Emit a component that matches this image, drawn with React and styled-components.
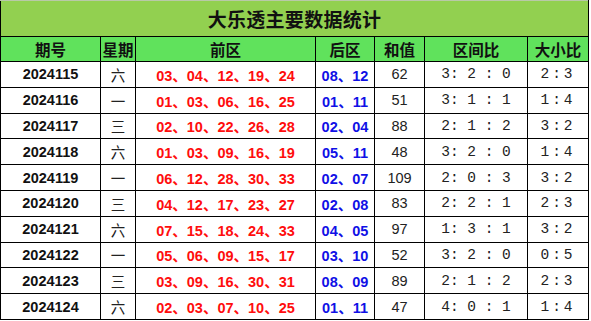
import React from "react";
import styled, { createGlobalStyle } from "styled-components";

const Global = createGlobalStyle`
  body {
    margin: 0;
    background: #fff;
    font-family: "Liberation Sans", "Noto Sans CJK SC", sans-serif;
  }
`;

const Table = styled.table`
  border-collapse: collapse;
  table-layout: fixed;
  width: 589px;
  border: 1px solid #000;
  td,
  th {
    border: 1px solid #000;
    text-align: center;
    padding: 0;
    white-space: nowrap;
    overflow: hidden;
  }
`;

const TitleCell = styled.th`
  height: 35px;
  background: #92d050;
  color: #111;
  font-family: "Noto Sans CJK SC", sans-serif;
  font-weight: 700;
  font-size: 19px;
  letter-spacing: 0.3px;
  border-top-color: #b9c9a8 !important;
`;

const HeadCell = styled.th`
  height: 24px;
  background: #60e25c;
  color: #111;
  font-family: "Noto Sans CJK SC", sans-serif;
  font-weight: 700;
  font-size: 15.5px;
`;

const Row = styled.tr`
  height: 25.8px;
`;

const Cell = styled.td`
  color: ${(p) => p.$color || "#222"};
  font-weight: ${(p) => (p.$bold ? 700 : 400)};
  font-size: 14.5px;
  font-family: ${(p) =>
    p.$mono
      ? '"Liberation Mono", "Noto Sans CJK SC", monospace'
      : p.$cjk
      ? '"Noto Sans CJK SC", sans-serif'
      : '"Liberation Sans", "Noto Sans CJK SC", sans-serif'};
  letter-spacing: ${(p) => p.$spacing || "0"};
  white-space: pre !important;
`;

const cols = [100, 35, 180, 59, 50, 103, 61];
const heads = ["期号", "星期", "前区", "后区", "和值", "区间比", "大小比"];

const rows = [
  ["2024115", "六", "03、04、12、19、24", "08、12", "62", "3: 2 : 0", "2:3"],
  ["2024116", "一", "01、03、06、16、25", "01、11", "51", "3: 1 : 1", "1:4"],
  ["2024117", "三", "02、10、22、26、28", "02、04", "88", "2: 1 : 2", "3:2"],
  ["2024118", "六", "01、03、09、16、19", "05、11", "48", "3: 2 : 0", "1:4"],
  ["2024119", "一", "06、12、28、30、33", "02、07", "109", "2: 0 : 3", "3:2"],
  ["2024120", "三", "04、12、17、23、27", "02、08", "83", "2: 2 : 1", "2:3"],
  ["2024121", "六", "07、15、18、24、33", "04、05", "97", "1: 3 : 1", "3:2"],
  ["2024122", "一", "05、06、09、15、17", "03、10", "52", "3: 2 : 0", "0:5"],
  ["2024123", "三", "03、09、16、30、31", "08、09", "89", "2: 1 : 2", "2:3"],
  ["2024124", "六", "02、03、07、10、25", "01、11", "47", "4: 0 : 1", "1:4"],
];

export default function App() {
  return (
    <>
      <Global />
      <Table>
        <colgroup>
          {cols.map((w, i) => (
            <col key={i} style={{ width: w }} />
          ))}
        </colgroup>
        <thead>
          <tr>
            <TitleCell colSpan={7}>大乐透主要数据统计</TitleCell>
          </tr>
          <tr>
            {heads.map((h) => (
              <HeadCell key={h}>{h}</HeadCell>
            ))}
          </tr>
        </thead>
        <tbody>
          {rows.map((r) => (
            <Row key={r[0]}>
              <Cell $bold $color="#111">{r[0]}</Cell>
              <Cell $cjk>{r[1]}</Cell>
              <Cell $bold $color="#ff0d0d">{r[2]}</Cell>
              <Cell $bold $color="#1010e6">{r[3]}</Cell>
              <Cell>{r[4]}</Cell>
              <Cell $mono>{r[5]}</Cell>
              <Cell $mono $spacing="3px">{r[6]}</Cell>
            </Row>
          ))}
        </tbody>
      </Table>
    </>
  );
}
